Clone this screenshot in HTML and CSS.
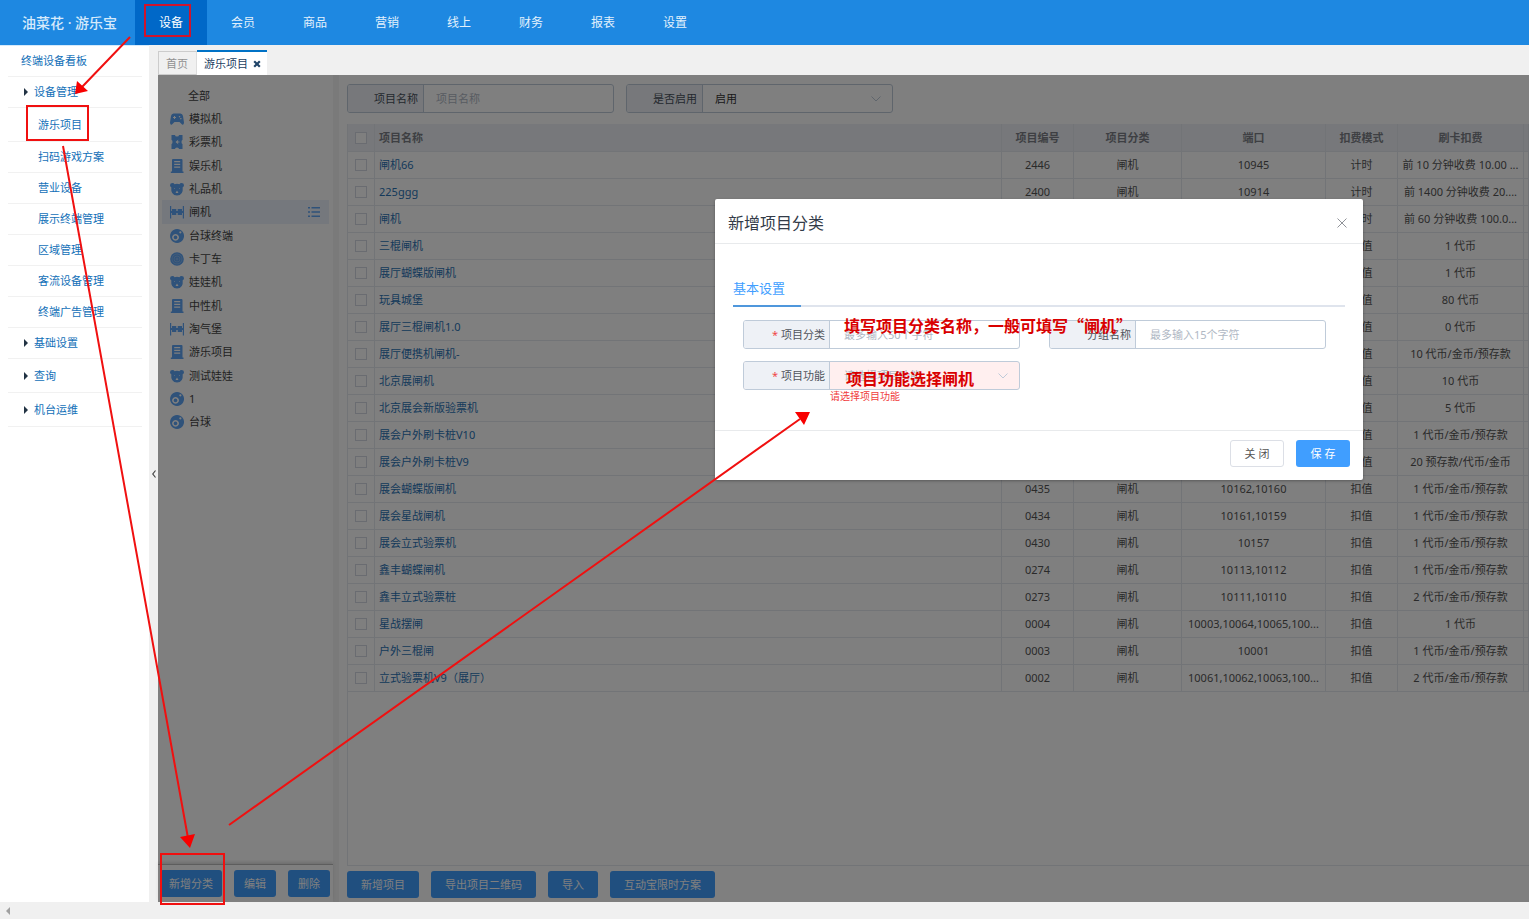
FILE: index.html
```html
<!DOCTYPE html>
<html lang="zh-CN">
<head>
<meta charset="utf-8">
<title>游乐项目</title>
<link rel="stylesheet" href="styles.css">
</head>
<body>
<svg class="sprite" aria-hidden="true">
  <symbol id="i-pad" viewBox="0 0 14 14"><path fill-rule="evenodd" d="M3.500 1.500h7Q12.500 1.500 13 4L14 10.500Q14 13 12.300 12.800L9.500 10h-5L1.700 12.800Q0 13 0 10.500L1 4Q1.500 1.500 3.500 1.500zM4 4v1H3v1h1v1h1V6h1V5H5V4zM9.500 4a.7.7 0 1 0 .1 0zM10.800 6a.7.7 0 1 0 .1 0z"/></symbol>
  <symbol id="i-ticket" viewBox="0 0 14 14"><path fill-rule="evenodd" d="M1.500 0h3.500a2 1.500 0 0 0 4 0h3.500v5a1 2 0 0 0 0 4v5H9a2 1.500 0 0 0-4 0H1.500V9a1 2 0 0 0 0-4zM8.500 4.500L5.500 7l3 2.500-.8-2H9.500v-1H7.700z"/></symbol>
  <symbol id="i-cab" viewBox="0 0 14 14"><path fill-rule="evenodd" d="M3 0h8.500Q12.500 0 12.500 1v11.500h1V14H.8v-1.500H2V1Q2 0 3 0zM4.200 2v1.300h6V2zM4.200 4.800v1.200h6V4.800zM4.200 7.500v1.200h6V7.500z"/></symbol>
  <symbol id="i-bear" viewBox="0 0 14 14"><path fill-rule="evenodd" d="M2.500 1Q4 1 4.500 2.200Q7 1.400 9.500 2.200Q10 1 11.500 1Q14 1 14 3.300Q14 5 12.700 5.300Q13.500 13.500 7 13.500Q.5 13.500 1.300 5.300Q0 5 0 3.300Q0 1 2.500 1zM4.500 6a.4.4 0 1 0 .1 0zM9.500 6a.4.4 0 1 0 .1 0zM7 8.500L5.500 11h3z"/></symbol>
  <symbol id="i-gate" viewBox="0 0 14 14"><path d="M0 1h1.200v12.500H0zM12.800 1H14v12.500h-1.200zM1 6h12v2H1zM2 4h4.300v6H2zM7.700 4H12v6H7.700z"/></symbol>
  <symbol id="i-ball" viewBox="0 0 14 14"><path fill-rule="evenodd" d="M7 0a7 7 0 1 0 .1 0zM5.500 5a3.400 3.400 0 1 0 .1 0zM10.300 2.200a1.100 1.100 0 1 0 .1 0z"/><circle cx="5.500" cy="8.400" r="1.800"/></symbol>
  <symbol id="i-wheel" viewBox="0 0 14 14"><circle cx="7" cy="7" r="6.800"/><g fill="none" stroke="#a5c8f0" stroke-width=".6"><circle cx="7" cy="7" r="5"/><circle cx="7" cy="7" r="3"/><circle cx="7" cy="7" r="1"/></g></symbol>
</svg>

<header class="topbar">
  <div class="logo">油菜花 · 游乐宝</div>
  <nav class="topnav">
    <a href="#" class="active">设备</a><a href="#">会员</a><a href="#">商品</a><a href="#">营销</a><a href="#">线上</a><a href="#">财务</a><a href="#">报表</a><a href="#">设置</a>
  </nav>
</header>

<div class="body">
  <nav class="sidebar">
    <a href="#">终端设备看板</a>
    <a href="#" class="group">设备管理</a>
    <a href="#" class="child tall">游乐项目</a>
    <a href="#" class="child">扫码游戏方案</a>
    <a href="#" class="child">营业设备</a>
    <a href="#" class="child">展示终端管理</a>
    <a href="#" class="child">区域管理</a>
    <a href="#" class="child">客流设备管理</a>
    <a href="#" class="child">终端广告管理</a>
    <a href="#" class="group">基础设置</a>
    <a href="#" class="group tall">查询</a>
    <a href="#" class="group tall">机台运维</a>
  </nav>
  <button class="collapse" aria-label="收起"><svg width="4" height="8" viewBox="0 0 4 8"><path d="M3.500 .5L.8 4l2.700 3.500" fill="none" stroke="#444" stroke-width="1.200"/></svg></button>

  <div class="content">
    <div class="tabs">
      <a href="#" class="tab">首页</a>
      <a href="#" class="tab current">游乐项目<svg width="8" height="8" viewBox="0 0 8 8"><path d="M1.200 1.200l5.600 5.600M6.800 1.200L1.200 6.800" stroke="#1f4468" stroke-width="2.200"/></svg></a>
    </div>

    <main class="workspace">
      <aside class="cats">
        <ul>
          <li class="plain">全部</li>
          <li><svg><use href="#i-pad"/></svg>模拟机</li>
          <li><svg><use href="#i-ticket"/></svg>彩票机</li>
          <li><svg><use href="#i-cab"/></svg>娱乐机</li>
          <li><svg><use href="#i-bear"/></svg>礼品机</li>
          <li class="on"><svg><use href="#i-gate"/></svg>闸机<svg class="menu" viewBox="0 0 12 12"><path d="M0 1h2v1.500H0zM3.500 1H12v1.500H3.500zM0 5.200h2v1.500H0zM3.500 5.200H12v1.500H3.500zM0 9.500h2V11H0zM3.500 9.500H12V11H3.500z"/></svg></li>
          <li><svg><use href="#i-ball"/></svg>台球终端</li>
          <li><svg><use href="#i-wheel"/></svg>卡丁车</li>
          <li><svg><use href="#i-bear"/></svg>娃娃机</li>
          <li><svg><use href="#i-cab"/></svg>中性机</li>
          <li><svg><use href="#i-gate"/></svg>淘气堡</li>
          <li><svg><use href="#i-cab"/></svg>游乐项目</li>
          <li><svg><use href="#i-bear"/></svg>测试娃娃</li>
          <li><svg><use href="#i-ball"/></svg>1</li>
          <li><svg><use href="#i-ball"/></svg>台球</li>
        </ul>
        <div class="cat-actions">
          <button class="btn">新增分类</button>
          <button class="btn">编辑</button>
          <button class="btn">删除</button>
        </div>
      </aside>

      <section class="main">
        <div class="filters">
          <div class="field"><label for="f-name">项目名称</label><input id="f-name" placeholder="项目名称"></div>
          <div class="field"><label for="f-on">是否启用</label><select id="f-on"><option>启用</option></select><svg class="chev" viewBox="0 0 10 6"><path d="M.5 .5L5 5 9.500 .5"/></svg></div>
        </div>
        <div class="grid">
          <table>
            <colgroup><col class="c-check"><col><col class="c-no"><col class="c-type"><col class="c-port"><col class="c-no"><col class="c-fee"><col class="c-rest"></colgroup>
            <thead><tr><th><input type="checkbox" aria-label="全选"></th><th>项目名称</th><th>项目编号</th><th>项目分类</th><th>端口</th><th>扣费模式</th><th>刷卡扣费</th><th></th></tr></thead>
            <tbody>
              <tr><td><input type="checkbox" aria-label="选择"></td><td><a href="#">闸机66</a></td><td>2446</td><td>闸机</td><td>10945</td><td>计时</td><td>前 10 分钟收费 10.00 ...</td><td></td></tr>
              <tr><td><input type="checkbox" aria-label="选择"></td><td><a href="#">225ggg</a></td><td>2400</td><td>闸机</td><td>10914</td><td>计时</td><td>前 1400 分钟收费 20....</td><td></td></tr>
              <tr><td><input type="checkbox" aria-label="选择"></td><td><a href="#">闸机</a></td><td></td><td></td><td></td><td>计时</td><td>前 60 分钟收费 100.0...</td><td></td></tr>
              <tr><td><input type="checkbox" aria-label="选择"></td><td><a href="#">三棍闸机</a></td><td></td><td></td><td></td><td>扣值</td><td>1 代币</td><td></td></tr>
              <tr><td><input type="checkbox" aria-label="选择"></td><td><a href="#">展厅蝴蝶版闸机</a></td><td></td><td></td><td></td><td>扣值</td><td>1 代币</td><td></td></tr>
              <tr><td><input type="checkbox" aria-label="选择"></td><td><a href="#">玩具城堡</a></td><td></td><td></td><td></td><td>扣值</td><td>80 代币</td><td></td></tr>
              <tr><td><input type="checkbox" aria-label="选择"></td><td><a href="#">展厅三棍闸机1.0</a></td><td></td><td></td><td></td><td>扣值</td><td>0 代币</td><td></td></tr>
              <tr><td><input type="checkbox" aria-label="选择"></td><td><a href="#">展厅便携机闸机-</a></td><td></td><td></td><td></td><td>扣值</td><td>10 代币/金币/预存款</td><td></td></tr>
              <tr><td><input type="checkbox" aria-label="选择"></td><td><a href="#">北京展闸机</a></td><td></td><td></td><td></td><td>扣值</td><td>10 代币</td><td></td></tr>
              <tr><td><input type="checkbox" aria-label="选择"></td><td><a href="#">北京展会新版验票机</a></td><td></td><td></td><td></td><td>扣值</td><td>5 代币</td><td></td></tr>
              <tr><td><input type="checkbox" aria-label="选择"></td><td><a href="#">展会户外刷卡桩V10</a></td><td></td><td></td><td></td><td>扣值</td><td>1 代币/金币/预存款</td><td></td></tr>
              <tr><td><input type="checkbox" aria-label="选择"></td><td><a href="#">展会户外刷卡桩V9</a></td><td></td><td></td><td></td><td>扣值</td><td>20 预存款/代币/金币</td><td></td></tr>
              <tr><td><input type="checkbox" aria-label="选择"></td><td><a href="#">展会蝴蝶版闸机</a></td><td>0435</td><td>闸机</td><td>10162,10160</td><td>扣值</td><td>1 代币/金币/预存款</td><td></td></tr>
              <tr><td><input type="checkbox" aria-label="选择"></td><td><a href="#">展会星战闸机</a></td><td>0434</td><td>闸机</td><td>10161,10159</td><td>扣值</td><td>1 代币/金币/预存款</td><td></td></tr>
              <tr><td><input type="checkbox" aria-label="选择"></td><td><a href="#">展会立式验票机</a></td><td>0430</td><td>闸机</td><td>10157</td><td>扣值</td><td>1 代币/金币/预存款</td><td></td></tr>
              <tr><td><input type="checkbox" aria-label="选择"></td><td><a href="#">鑫丰蝴蝶闸机</a></td><td>0274</td><td>闸机</td><td>10113,10112</td><td>扣值</td><td>1 代币/金币/预存款</td><td></td></tr>
              <tr><td><input type="checkbox" aria-label="选择"></td><td><a href="#">鑫丰立式验票桩</a></td><td>0273</td><td>闸机</td><td>10111,10110</td><td>扣值</td><td>2 代币/金币/预存款</td><td></td></tr>
              <tr><td><input type="checkbox" aria-label="选择"></td><td><a href="#">星战摆闸</a></td><td>0004</td><td>闸机</td><td>10003,10064,10065,100...</td><td>扣值</td><td>1 代币</td><td></td></tr>
              <tr><td><input type="checkbox" aria-label="选择"></td><td><a href="#">户外三棍闸</a></td><td>0003</td><td>闸机</td><td>10001</td><td>扣值</td><td>1 代币/金币/预存款</td><td></td></tr>
              <tr><td><input type="checkbox" aria-label="选择"></td><td><a href="#">立式验票机V9（展厅）</a></td><td>0002</td><td>闸机</td><td>10061,10062,10063,100...</td><td>扣值</td><td>2 代币/金币/预存款</td><td></td></tr>
            </tbody>
          </table>
        </div>
        <div class="main-actions">
          <button class="btn">新增项目</button>
          <button class="btn">导出项目二维码</button>
          <button class="btn">导入</button>
          <button class="btn">互动宝限时方案</button>
        </div>
      </section>

      <div class="mask"></div>
      <div class="dialog" role="dialog" aria-labelledby="dlg-title">
        <div class="dlg-head">
          <h2 id="dlg-title">新增项目分类</h2>
          <button class="close" aria-label="关闭"><svg width="10" height="10" viewBox="0 0 10 10"><path d="M.5 .5l9 9M9.500 .5l-9 9" stroke="#909399"/></svg></button>
        </div>
        <div class="dlg-body">
          <div class="dlg-tabs"><span>基本设置</span></div>
          <div class="form">
            <div class="field"><label for="d-cat"><i>*</i>项目分类</label><input id="d-cat" placeholder="最多输入50个字符"></div>
            <div class="field"><label for="d-group">分组名称</label><input id="d-group" placeholder="最多输入15个字符"></div>
            <div class="cell">
              <div class="field invalid"><label for="d-fn"><i>*</i>项目功能</label><select id="d-fn"><option>请选择项目功能</option></select><svg class="chev" viewBox="0 0 10 6"><path d="M.5 .5L5 5 9.500 .5"/></svg></div>
              <p class="error">请选择项目功能</p>
            </div>
          </div>
        </div>
        <div class="dlg-foot">
          <button class="plain-btn">关 闭</button>
          <button class="save-btn">保 存</button>
        </div>
        <p class="note note-name">填写项目分类名称，一般可填写“闸机”</p>
        <p class="note note-fn">项目功能选择闸机</p>
      </div>
    </main>
  </div>
</div>
<footer class="hscroll"><svg width="4" height="8" viewBox="0 0 4 8"><path d="M4 0v8L0 4z" fill="#a0a0a0"/></svg></footer>

<svg class="marks" aria-hidden="true">
  <g fill="none" stroke="#f01010" stroke-width="2">
    <path d="M145 5h45v31h-45z" stroke="#d0142d"/>
    <path d="M27 106h61v34H27zM161 854h63v50h-63z"/>
    <path d="M130 37L82 87M63 146l125 692M229 825l571-406"/>
  </g>
  <path fill="#f80000" d="M75 94l2-13 11 10zM190 848l-10-11 15-3zM810 412l-15 0 9 13z"/>
</svg>
</body>
</html>
```
FILE: styles.css
```css
* { box-sizing: border-box; }
body {
  margin: 0;
  height: 100vh;
  display: flex;
  flex-direction: column;
  overflow: hidden;
  background: #f0f0f0;
  color: #333;
  font: 11px/16px "Noto Sans", "Noto Sans CJK SC", sans-serif;
}
a { color: inherit; text-decoration: none; }
button, input, select { font: inherit; color: inherit; }
button { cursor: pointer; padding: 0; border: 0; background: none; white-space: nowrap; }
ul, p, h2 { margin: 0; padding: 0; list-style: none; }
.sprite { position: absolute; width: 0; height: 0; }

.topbar { display: flex; flex: none; height: 45px; background: #1e88e1; color: #fff; }
.logo { width: 135px; padding-left: 22px; font-size: 14px; font-weight: 500; line-height: 45px; white-space: pre; color: #d6eafb; }
.topnav { display: flex; font-size: 12px; line-height: 45px; }
.topnav a { width: 72px; text-align: center; color: #e3f1fc; }
.topnav .active { background: #0068c8; color: #fff; }

.body { display: flex; flex: 1; min-height: 0; }
.sidebar { width: 149px; padding: 0 7px 0 8px; border-top: 1px solid #d5eafb; background: #fff; color: #1270b8; }
.sidebar a { display: flex; align-items: center; height: 31px; padding-left: 13px; border-bottom: 1px solid #f1f1f1; }
.sidebar .tall { height: 34px; }
.sidebar .child { padding-left: 30px; }
.sidebar .group { padding-left: 16px; }
.sidebar .group::before { content: ""; margin-right: 6px; border-left: 4px solid #234; border-top: 4px solid transparent; border-bottom: 4px solid transparent; }
.collapse { width: 9px; display: flex; align-items: center; justify-content: center; }

.content { flex: 1; min-width: 0; display: flex; flex-direction: column; }
.tabs { display: flex; align-items: flex-end; flex: none; height: 30px; padding-top: 5px; }
.tab { height: 24px; padding: 0 8px 0 7px; border: 1px solid #ccc; border-right-color: #ddd; line-height: 24px; color: #909090; }
.tab.current { display: flex; align-items: center; gap: 5px; height: 25px; padding: 0 6px 0 7px; border: 0; border-top: 2px solid #0072c6; background: #fff; color: #23405f; }

.workspace { position: relative; flex: 1; min-height: 0; display: flex; background: #fff; }
.cats { width: 181px; display: flex; flex-direction: column; border-right: 6px solid #f4f4f4; color: #444; }
.cats ul { flex: 1; padding: 9px 4px 0; }
.cats li { display: flex; align-items: center; gap: 5px; height: 23px; padding-left: 8px; }
.cats li:nth-child(3n) { height: 24px; }
.cats .plain { padding-left: 26px; }
.cats .on { background: #eaf1fa; }
.cats svg { width: 14px; height: 14px; fill: #5ea4f4; }
.cats .menu { width: 12px; height: 12px; margin: 0 9px 0 auto; }
.cat-actions { display: flex; gap: 12px; padding: 5px 2px; border-top: 1px solid #bbb; box-shadow: 0 -2px 3px #ddd; }
.btn { height: 27px; padding: 0 14px; border-radius: 3px; background: #409eff; color: #fff; }
.cat-actions .btn { padding: 0 10px; }
.cat-actions .btn:first-child { padding: 0 9px; }

.main { flex: 1; min-width: 0; display: flex; flex-direction: column; padding: 9px 0 0 8px; }
.filters { display: flex; gap: 12px; padding-bottom: 11px; }
.filters .field { width: 267px; }
.field { position: relative; display: flex; height: 29px; border: 1px solid #bfcbd9; border-radius: 3px; background: #fff; }
.field label { width: 76px; padding-right: 5px; border-right: 1px solid #bfcbd9; border-radius: 2px 0 0 2px; background: #eef1f6; line-height: 27px; text-align: right; color: #48505c; }
.field input, .field select { flex: 1; min-width: 0; padding: 0 12px; border: 0; outline: 0; appearance: none; background: transparent; }
.field ::placeholder { color: #b0b8c4; }
.chev { position: absolute; right: 11px; top: 11px; width: 10px; height: 6px; fill: none; stroke: #bfcbd9; }

.grid { flex: 1; min-height: 0; border-left: 1px solid #e4e8ee; border-bottom: 1px solid #e4e8ee; }
table { width: 100%; table-layout: fixed; border-spacing: 0; color: #555; }
th, td { height: 27px; padding: 0 4px; border-right: 1px solid #e4e8ee; border-bottom: 1px solid #e4e8ee; text-align: center; white-space: nowrap; overflow: hidden; }
th { height: 28px; background: #eef1f6; color: #7c7f86; font-weight: 700; }
th:nth-child(2), td:nth-child(2) { text-align: left; }
td a { color: #2a72b5; }
th:last-child, td:last-child { padding: 0; }
.c-check { width: 27px; }
.c-no { width: 72px; }
.c-type { width: 108px; }
.c-port { width: 144px; }
.c-fee { width: 126px; }
.c-rest { width: 5px; }
table input { display: block; appearance: none; width: 12px; height: 12px; margin: 0 auto; border: 1px solid #d4d9e2; background: #fff; }
.main-actions { display: flex; gap: 12px; padding: 5px 0 4px; }

.mask { position: absolute; inset: 0; background: rgba(0, 0, 0, .5); }
.dialog { position: absolute; top: 124px; right: 166px; width: 648px; border-radius: 2px; background: #fff; box-shadow: 0 1px 3px rgba(0, 0, 0, .3); }
.dlg-head { display: flex; align-items: center; justify-content: space-between; height: 45px; padding: 4px 16px 0 13px; border-bottom: 1px solid #e8eaec; }
.dlg-head h2 { font-size: 16px; font-weight: 400; line-height: 24px; color: #333b48; }
.close { display: flex; }
.dlg-body { padding: 32px 18px 0; }
.dlg-tabs { border-bottom: 2px solid #dfe4ed; font-size: 13px; color: #409eff; }
.dlg-tabs span { display: block; width: 68px; margin-bottom: -2px; padding-bottom: 4px; border-bottom: 2px solid #4f97dc; line-height: 25px; }
.form { display: grid; grid-template-columns: 277px 277px; gap: 12px 29px; padding: 13px 10px 28px; }
.form label { width: 86px; padding-right: 4px; color: #50545c; }
.form i { margin-right: 3px; font-style: normal; color: #f04848; }
.form input, .form select { padding: 0 14px; }
.invalid { background: #ffefef; }
.invalid select { color: #b0b8c4; }
.error { padding-left: 87px; font-size: 10px; line-height: 12px; color: #f03c3c; }
.dlg-foot { display: flex; justify-content: flex-end; gap: 12px; padding: 9px 13px 13px; border-top: 1px solid #e8eaec; }
.dlg-foot button { width: 54px; height: 27px; border-radius: 3px; }
.plain-btn { border: 1px solid #dcdfe6; color: #555; }
.save-btn { background: #409eff; color: #fff; }
.note { position: absolute; font: 700 16px/20px "Noto Sans CJK SC", sans-serif; color: #d90000; white-space: nowrap; }
.note-name { left: 129px; top: 116px; }
.note-fn { left: 131px; top: 169px; }

.hscroll { display: flex; align-items: center; flex: none; height: 17px; padding-left: 6px; }
.marks { position: absolute; left: 0; top: 0; width: 100%; height: 100%; pointer-events: none; }
```
